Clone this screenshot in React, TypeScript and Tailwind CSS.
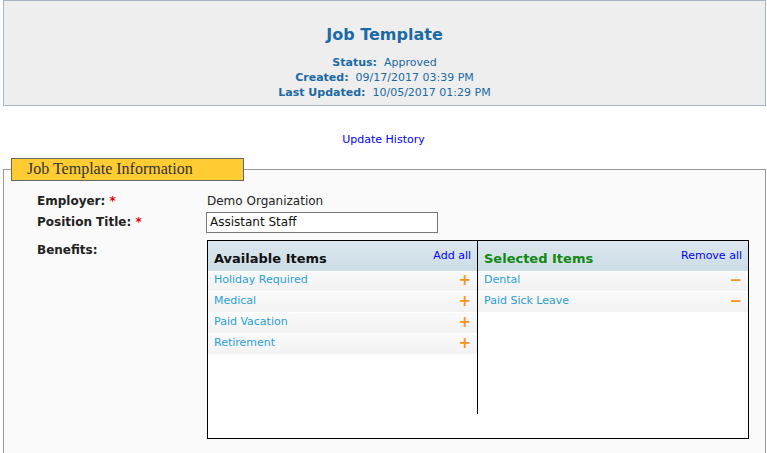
import React from "react";

const F = { fontFamily: "'DejaVu Sans', Verdana, sans-serif" };

function Row({ label, sign }: { label: string; sign: string }) {
  return (
    <div className="flex items-center justify-between h-[20px] mb-[1px] px-[6px] bg-gradient-to-b from-[#fafafa] to-[#f2f2f2] text-[11px] text-[#2a9fd6]">
      <span>{label}</span>
      <span className="text-[#f7941d] font-bold text-[15px] leading-none">{sign}</span>
    </div>
  );
}

export default function App() {
  return (
    <div className="w-[767px] h-[453px] bg-white overflow-hidden" style={F}>
      <div className="ml-[3px] mr-[1px] h-[106px] border border-[#a6b6c4] bg-[#eeeeee] flex flex-col items-center text-[#1b6aa5]">
        <div className="mt-[22px] text-[16px] font-bold">Job Template</div>
        <div className="mt-[8px] text-[11px] leading-[15px] text-center">
          <div><b>Status:</b>&nbsp; Approved</div>
          <div><b>Created:</b>&nbsp; 09/17/2017 03:39 PM</div>
          <div><b>Last Updated:</b>&nbsp; 10/05/2017 01:29 PM</div>
        </div>
      </div>
      <div className="mt-[26px] text-center text-[11px] text-[#0000ff]">Update History</div>
      <div className="relative mt-[9px] ml-[3px] mr-[1px]">
        <div className="relative z-10 ml-[8px] w-[233px] h-[23px] bg-[#ffcc33] border border-[#666] flex items-center pl-[15px] text-[16px] text-[#333]" style={{ fontFamily: "'Liberation Serif', serif" }}>
          Job Template Information
        </div>
        <div className="-mt-[12px] border border-[#999] bg-[#fafafa] h-[300px] pt-[22px]">
          <div className="flex text-[12px] items-center h-[18px]">
            <div className="w-[203px] pl-[33px] font-bold text-[#222]">Employer: <span className="text-[#d00]">*</span></div>
            <div className="text-[#222]">Demo Organization</div>
          </div>
          <div className="flex text-[12px] items-center mt-[2px]">
            <div className="w-[202px] pl-[33px] font-bold text-[#222]">Position Title: <span className="text-[#d00]">*</span></div>
            <div className="w-[232px] h-[21px] border border-[#777] bg-white px-[3px] flex items-center text-[#111]">Assistant Staff</div>
          </div>
          <div className="flex mt-[7px]">
            <div className="w-[203px] pl-[33px] font-bold text-[12px] text-[#222] pt-[1px]">Benefits:</div>
            <div className="w-[542px] h-[199px] border border-black bg-white flex">
              <div className="w-[270px] flex flex-col border-r border-black h-[173px]">
                <div className="h-[30px] bg-gradient-to-b from-[#dce7ee] to-[#ccdde6] flex justify-between items-start px-[6px]">
                  <span className="mt-[8px] text-[13px] font-bold text-[#111]">Available Items</span>
                  <span className="mt-[7px] text-[11px] text-[#0000ff]">Add all</span>
                </div>
                <Row label="Holiday Required" sign="+" />
                <Row label="Medical" sign="+" />
                <Row label="Paid Vacation" sign="+" />
                <Row label="Retirement" sign="+" />
              </div>
              <div className="flex-1 flex flex-col">
                <div className="h-[30px] bg-gradient-to-b from-[#dce7ee] to-[#ccdde6] flex justify-between items-start px-[6px]">
                  <span className="mt-[8px] text-[13px] font-bold text-[#118811]">Selected Items</span>
                  <span className="mt-[7px] text-[11px] text-[#0000ff]">Remove all</span>
                </div>
                <Row label="Dental" sign="−" />
                <Row label="Paid Sick Leave" sign="−" />
              </div>
            </div>
          </div>
        </div>
      </div>
    </div>
  );
}
